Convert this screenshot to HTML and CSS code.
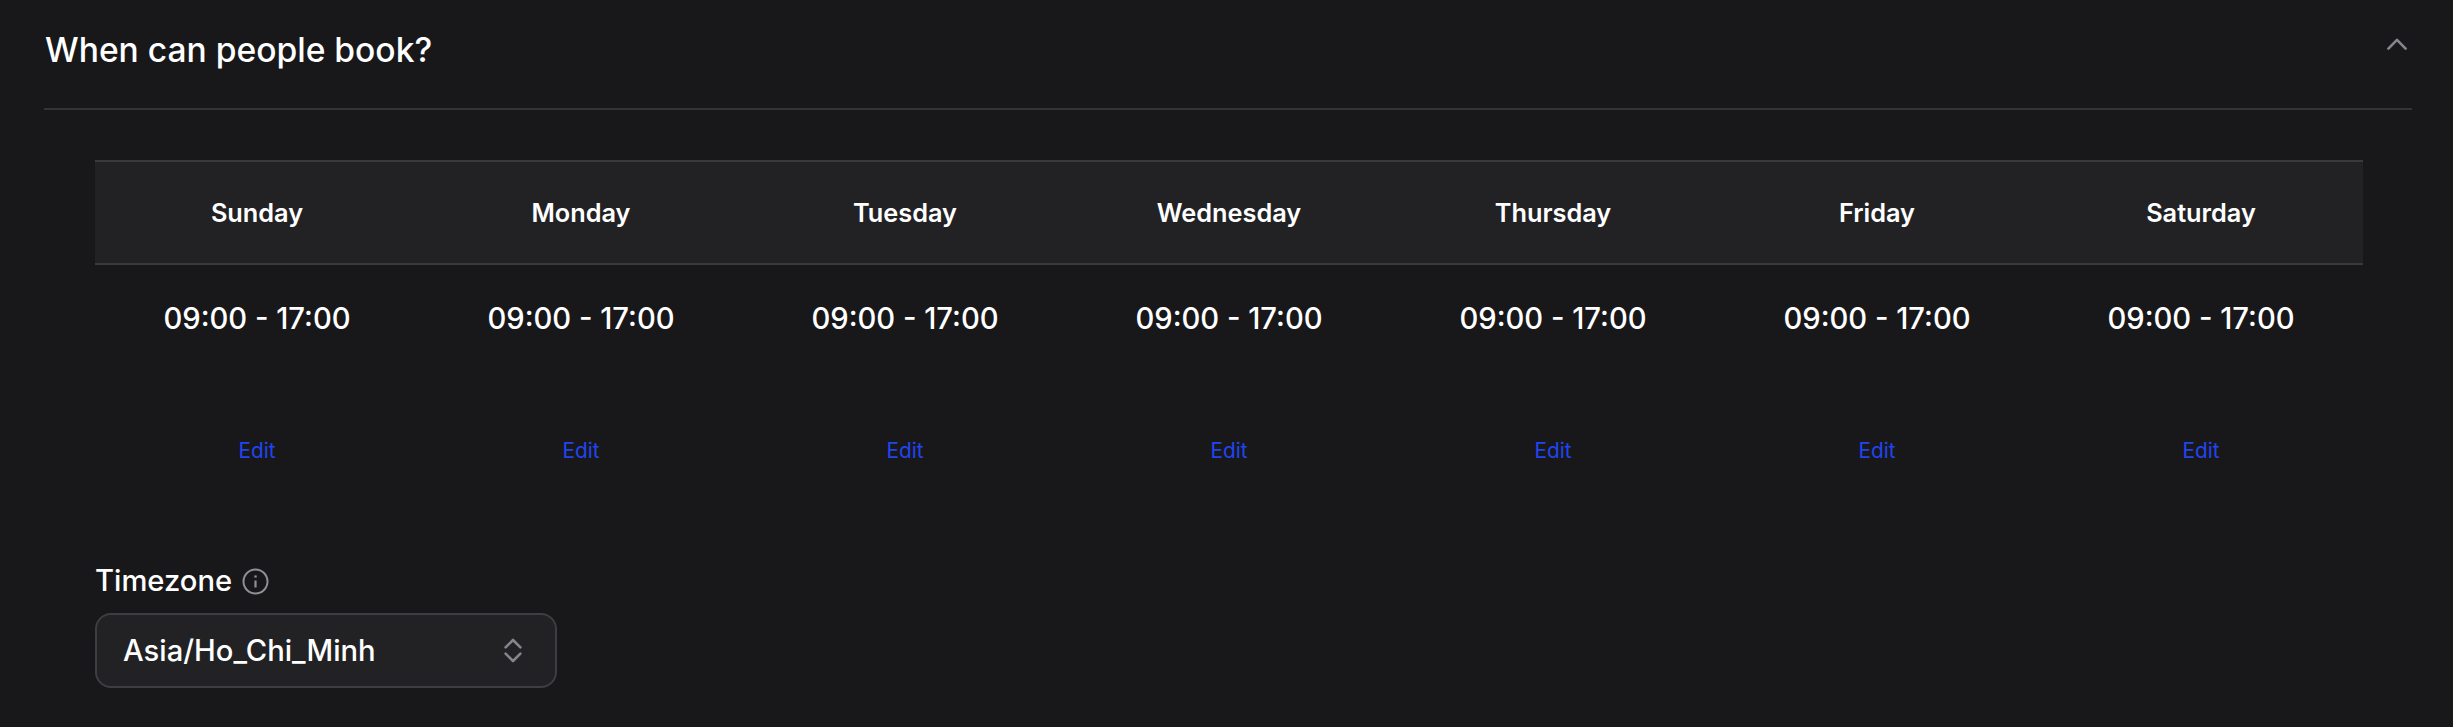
FILE: index.html
```html
<!DOCTYPE html>
<html lang="en">
<head>
    <meta charset="UTF-8">
    <title>When can people book?</title>
    <link rel="stylesheet" href="styles.css">
</head>
<body>
<section class="panel">
    <!-- header -->
    <div class="panel-head">
        <h2 class="panel-title">When can people book?</h2>
        <svg class="chev" width="20" height="12" viewBox="0 0 20 12" fill="none" stroke="#85858d" stroke-width="2.6" stroke-linecap="round" stroke-linejoin="round"><path d="M1.4 10.6 10 1.8l8.6 8.8"/></svg>
    </div>

    <div class="panel-body">
        <!-- week table -->
        <div class="week">
            <div class="week-head">
                <div class="day">Sunday</div>
                <div class="day">Monday</div>
                <div class="day">Tuesday</div>
                <div class="day">Wednesday</div>
                <div class="day">Thursday</div>
                <div class="day">Friday</div>
                <div class="day">Saturday</div>
            </div>
            <div class="week-row">
                <div class="slot"><span class="hours">09:00 - 17:00</span><a class="edit">Edit</a></div>
                <div class="slot"><span class="hours">09:00 - 17:00</span><a class="edit">Edit</a></div>
                <div class="slot"><span class="hours">09:00 - 17:00</span><a class="edit">Edit</a></div>
                <div class="slot"><span class="hours">09:00 - 17:00</span><a class="edit">Edit</a></div>
                <div class="slot"><span class="hours">09:00 - 17:00</span><a class="edit">Edit</a></div>
                <div class="slot"><span class="hours">09:00 - 17:00</span><a class="edit">Edit</a></div>
                <div class="slot"><span class="hours">09:00 - 17:00</span><a class="edit">Edit</a></div>
            </div>
        </div>

        <!-- timezone -->
        <div class="tz">
            <div class="tz-label">
                <span>Timezone</span>
                <svg width="27" height="27" viewBox="0 0 27 27" fill="none" stroke="#8f8f96" stroke-width="2"><circle cx="13.5" cy="13.5" r="12"/><path d="M13.5 12.5v7" stroke-width="2.2"/><path d="M13.5 7.4v2.2" stroke-width="2.4"/></svg>
            </div>
            <div class="tz-select">
                <span>Asia/Ho_Chi_Minh</span>
                <svg width="18" height="25" viewBox="0 0 18 25" fill="none" stroke="#85858d" stroke-width="2.6" stroke-linecap="round" stroke-linejoin="round"><path d="M1.6 9.4 9 2l7.4 7.4"/><path d="M1.6 15.6 9 23l7.4-7.4"/></svg>
            </div>
        </div>
    </div>
</section>
</body>
</html>
```
FILE: styles.css
```css
body{
    margin: 0;
    background-color: #18181b;
    color: #fff;
    font-family: Inter, "Liberation Sans", sans-serif;
}

/* 전체 패널 */
.panel{
    padding: 0 41px 0 44px;
}

/* 상단 제목줄 */
.panel-head{
    display: flex;
    justify-content: space-between;
    align-items: center;
    height: 110px;
    padding: 0 5px 10px 1px;
    box-sizing: border-box;
    border-bottom: 2px solid #343437;
}
.panel-title{
    margin: 0;
    font-size: 33.6px;
    font-weight: 500;
}
.chev{
    margin-top: -10px;
}

.panel-body{
    padding: 50px 49px 0 51px;
}

/* 요일 표 */
.week-head,
.week-row{
    display: grid;
    grid-template-columns: repeat(7, 1fr);
}
.week-head{
    height: 105px;
    box-sizing: border-box;
    border-top: 2px solid #3a3a3d;
    border-bottom: 2px solid #3a3a3d;
    background-color: #222225;
}
.day{
    display: flex;
    justify-content: center;
    align-items: center;
    padding-bottom: 1px;
    font-size: 25.3px;
    font-weight: 600;
}
.slot{
    display: flex;
    flex-direction: column;
    align-items: center;
    padding-top: 36px;
}
.hours{
    font-size: 29.2px;
    font-weight: 500;
    line-height: 36px;
}
.edit{
    margin-top: 102px;
    font-size: 20.8px;
    line-height: 24px;
    color: #2045f0;
}

/* 타임존 */
.tz{
    margin-top: 100px;
}
.tz-label{
    display: flex;
    align-items: center;
    gap: 10px;
    font-size: 29.2px;
    font-weight: 500;
    line-height: 36px;
}
.tz-select{
    display: flex;
    justify-content: space-between;
    align-items: center;
    width: 462px;
    height: 75px;
    margin-top: 14px;
    padding: 0 33px 0 26px;
    box-sizing: border-box;
    border: 2px solid #3e3e42;
    border-radius: 16px;
    background-color: #222225;
    font-size: 29.2px;
    font-weight: 500;
}
```
